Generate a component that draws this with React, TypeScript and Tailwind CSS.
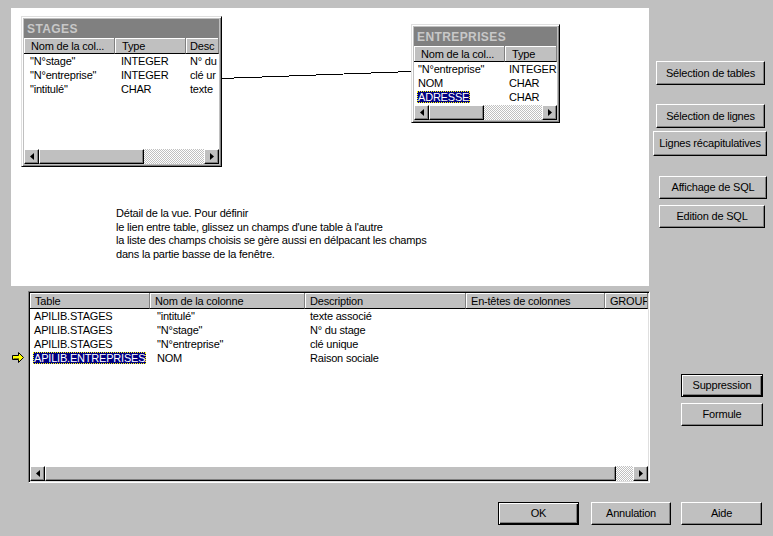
import React from 'react'

const raised =
  'border border-t-white border-l-white border-r-black border-b-black shadow-[inset_-1px_-1px_#808080] bg-[#c0c0c0]'
const defaultBtn =
  'border border-black shadow-[inset_1px_1px_white,inset_-1px_-1px_black,inset_-2px_-2px_#808080] bg-[#c0c0c0]'
const headerCell =
  'h-full shrink-0 overflow-hidden whitespace-nowrap bg-[#c0c0c0] border-r border-b border-r-[#808080] border-b-black shadow-[inset_1px_1px_white]'
const checker =
  'bg-[image:repeating-conic-gradient(#c0c0c0_0%_25%,#ffffff_0%_50%)] bg-[length:2px_2px]'

const Btn = ({ label, className, def }: { label: string; className: string; def?: boolean }) => (
  <div className={`${def ? defaultBtn : raised} ${className} flex items-center justify-center whitespace-nowrap`}>
    {label}
  </div>
)

const ScrollArrow = ({ dir }: { dir: 'left' | 'right' }) => (
  <div className={`${raised} w-[15px] h-full shrink-0 flex items-center justify-center`}>
    <svg width="4" height="7" viewBox="0 0 4 7">
      {dir === 'left' ? <polygon points="4,0 4,7 0,3.5" fill="#000" /> : <polygon points="0,0 0,7 4,3.5" fill="#000" />}
    </svg>
  </div>
)

const ScrollBar = ({ thumb }: { thumb: string }) => (
  <div className="flex h-[15px] shrink-0 bg-[#c0c0c0]">
    <ScrollArrow dir="left" />
    <div className={`${raised} ${thumb} h-full shrink-0`} />
    <div className={`flex-1 h-full ${checker}`} />
    <ScrollArrow dir="right" />
  </div>
)

const windowFrame =
  'absolute border border-t-[#dfdfdf] border-l-[#dfdfdf] border-r-black border-b-black shadow-[inset_1px_1px_white,inset_-1px_-1px_#808080] bg-[#c0c0c0] p-[2px] flex flex-col'

const App: React.FC = () => {
  return (
    <div className="w-[773px] h-[536px] bg-[#c0c0c0] overflow-hidden text-[11px] tracking-[-0.2px] leading-none text-black font-['Liberation_Sans',Arial,sans-serif]">
      <div className="flex">
        {/* left side: view canvas + column grid */}
        <div className="w-[650px] shrink-0 pl-[11px] pt-[8px]">
          <div className="relative w-[638px] h-[278px] bg-white">
            {/* link between tables */}
            <svg className="absolute inset-0 pointer-events-none" width="638" height="278">
              <line x1="210" y1="70.5" x2="401" y2="63.5" stroke="#000" strokeWidth="1" shapeRendering="crispEdges" />
            </svg>

            {/* STAGES */}
            <div className={`${windowFrame} left-[10px] top-[8px] w-[201px] h-[151px]`}>
              <div className="h-[19px] shrink-0 bg-[#808080] text-[#c8c8c8] font-bold text-[12px] pl-[3px] flex items-center tracking-[0.4px]">
                STAGES
              </div>
              <div className="flex-1 flex flex-col bg-white overflow-hidden">
                <div className="flex h-[16px] shrink-0 leading-[16px]">
                  <div className={`${headerCell} w-[91px] pl-[7px]`}>Nom de la col...</div>
                  <div className={`${headerCell} w-[71px] pl-[7px]`}>Type</div>
                  <div className={`${headerCell} flex-1 pl-[4px]`}>Desc</div>
                </div>
                <div className="flex-1 overflow-hidden">
                  {[
                    ['"N°stage"', 'INTEGER', 'N° du'],
                    ['"N°entreprise"', 'INTEGER', 'clé ur'],
                    ['"intitulé"', 'CHAR', 'texte'],
                  ].map((r) => (
                    <div key={r[0]} className="flex h-[14px] leading-[14px] whitespace-nowrap">
                      <div className="w-[91px] pl-[6px] shrink-0 overflow-hidden">{r[0]}</div>
                      <div className="w-[71px] pl-[6px] shrink-0 overflow-hidden">{r[1]}</div>
                      <div className="flex-1 pl-[4px] overflow-hidden">{r[2]}</div>
                    </div>
                  ))}
                </div>
                <ScrollBar thumb="w-[105px]" />
              </div>
            </div>

            {/* ENTREPRISES */}
            <div className={`${windowFrame} left-[400px] top-[16px] w-[149px] h-[99px]`}>
              <div className="h-[19px] shrink-0 bg-[#808080] text-[#c8c8c8] font-bold text-[12px] pl-[3px] flex items-center tracking-[0.4px]">
                ENTREPRISES
              </div>
              <div className="flex-1 flex flex-col bg-white overflow-hidden">
                <div className="flex h-[16px] shrink-0 leading-[16px]">
                  <div className={`${headerCell} w-[91px] pl-[7px]`}>Nom de la col...</div>
                  <div className={`${headerCell} flex-1 pl-[7px]`}>Type</div>
                </div>
                <div className="flex-1 overflow-hidden">
                  {[
                    ['"N°entreprise"', 'INTEGER'],
                    ['NOM', 'CHAR'],
                    ['ADRESSE', 'CHAR'],
                  ].map((r) => (
                    <div key={r[0]} className="flex h-[14px] leading-[14px] whitespace-nowrap">
                      <div className="w-[91px] pl-[3px] shrink-0 overflow-hidden">
                        {r[0] === 'ADRESSE' ? (
                          <span className="bg-[#000080] text-white px-[1px] outline-1 outline-dotted outline-[#ffff00] -outline-offset-1">
                            {r[0]}
                          </span>
                        ) : (
                          <span className="pl-[1px]">{r[0]}</span>
                        )}
                      </div>
                      <div className="flex-1 pl-[4px] overflow-hidden">{r[1]}</div>
                    </div>
                  ))}
                </div>
                <ScrollBar thumb="w-[55px]" />
              </div>
            </div>

            {/* description text */}
            <div className="absolute left-[105px] top-[199px] leading-[13.5px] whitespace-nowrap">
              <p>Détail de la vue. Pour définir</p>
              <p>le lien entre table, glissez un champs d'une table à l'autre</p>
              <p>la liste des champs choisis se gère aussi en délpacant les champs</p>
              <p>dans la partie basse de la fenêtre.</p>
            </div>
          </div>

          <div className="flex mt-[5px]">
            <div className="w-[17px] shrink-0 pt-[61px] pl-[1px]">
              <svg width="12" height="11" viewBox="0 0 12 11">
                <polygon points="0.5,3.5 6.5,3.5 6.5,0.5 11.5,5.5 6.5,10.5 6.5,7.5 0.5,7.5" fill="#ffff00" stroke="#000" strokeWidth="1" />
                <line x1="1.5" y1="6.5" x2="7" y2="6.5" stroke="#808000" />
              </svg>
            </div>
            <div className="w-[622px] h-[192px] p-[1px] border border-t-[#808080] border-l-[#808080] border-r-white border-b-white shadow-[inset_1px_1px_black,inset_-1px_-1px_#dfdfdf] bg-white">
              <div className="h-full flex flex-col overflow-hidden">
                <div className="flex h-[16px] shrink-0 leading-[16px]">
                  <div className={`${headerCell} w-[120px] pl-[5px]`}>Table</div>
                  <div className={`${headerCell} w-[155px] pl-[5px]`}>Nom de la colonne</div>
                  <div className={`${headerCell} w-[161px] pl-[5px]`}>Description</div>
                  <div className={`${headerCell} w-[139px] pl-[5px]`}>En-têtes de colonnes</div>
                  <div className={`${headerCell} flex-1 pl-[5px]`}>GROUP</div>
                </div>
                <div className="flex-1 overflow-hidden">
                  {[
                    ['APILIB.STAGES', '"intitulé"', 'texte associé'],
                    ['APILIB.STAGES', '"N°stage"', 'N° du stage'],
                    ['APILIB.STAGES', '"N°entreprise"', 'clé unique'],
                    ['APILIB.ENTREPRISES', 'NOM', 'Raison sociale'],
                  ].map((r, i) => (
                    <div key={i} className="flex h-[14px] leading-[14px] whitespace-nowrap">
                      <div className="w-[120px] shrink-0 pl-[3px]">
                        {i === 3 ? (
                          <span className="bg-[#000080] text-white px-[1px] outline-1 outline-dotted outline-[#ffff00] -outline-offset-1">
                            {r[0]}
                          </span>
                        ) : (
                          <span className="pl-[1px]">{r[0]}</span>
                        )}
                      </div>
                      <div className="w-[155px] shrink-0 pl-[7px]">{r[1]}</div>
                      <div className="w-[161px] shrink-0 pl-[5px]">{r[2]}</div>
                    </div>
                  ))}
                </div>
                <ScrollBar thumb="w-[571px]" />
              </div>
            </div>
          </div>
        </div>

        {/* right side buttons */}
        <div className="flex flex-col items-start">
          <Btn label="Sélection de tables" className="ml-[6px] mt-[61px] w-[109px] h-[24px]" />
          <Btn label="Sélection de lignes" className="ml-[6px] mt-[19px] w-[109px] h-[24px]" />
          <Btn label="Lignes récapitulatives" className="ml-[3px] mt-[3px] w-[114px] h-[25px]" />
          <Btn label="Affichage de SQL" className="ml-[9px] mt-[20px] w-[108px] h-[23px]" />
          <Btn label="Edition de SQL" className="ml-[9px] mt-[6px] w-[106px] h-[23px]" />
          <Btn label="Suppression" def className="ml-[31px] mt-[146px] w-[82px] h-[23px]" />
          <Btn label="Formule" className="ml-[31px] mt-[6px] w-[82px] h-[23px]" />
        </div>
      </div>

      {/* dialog buttons */}
      <div className="flex pl-[498px] mt-[19px]">
        <Btn label="OK" def className="w-[81px] h-[23px]" />
        <Btn label="Annulation" className="ml-[12px] w-[80px] h-[23px]" />
        <Btn label="Aide" className="ml-[10px] w-[81px] h-[23px]" />
      </div>
    </div>
  )
}

export default App
